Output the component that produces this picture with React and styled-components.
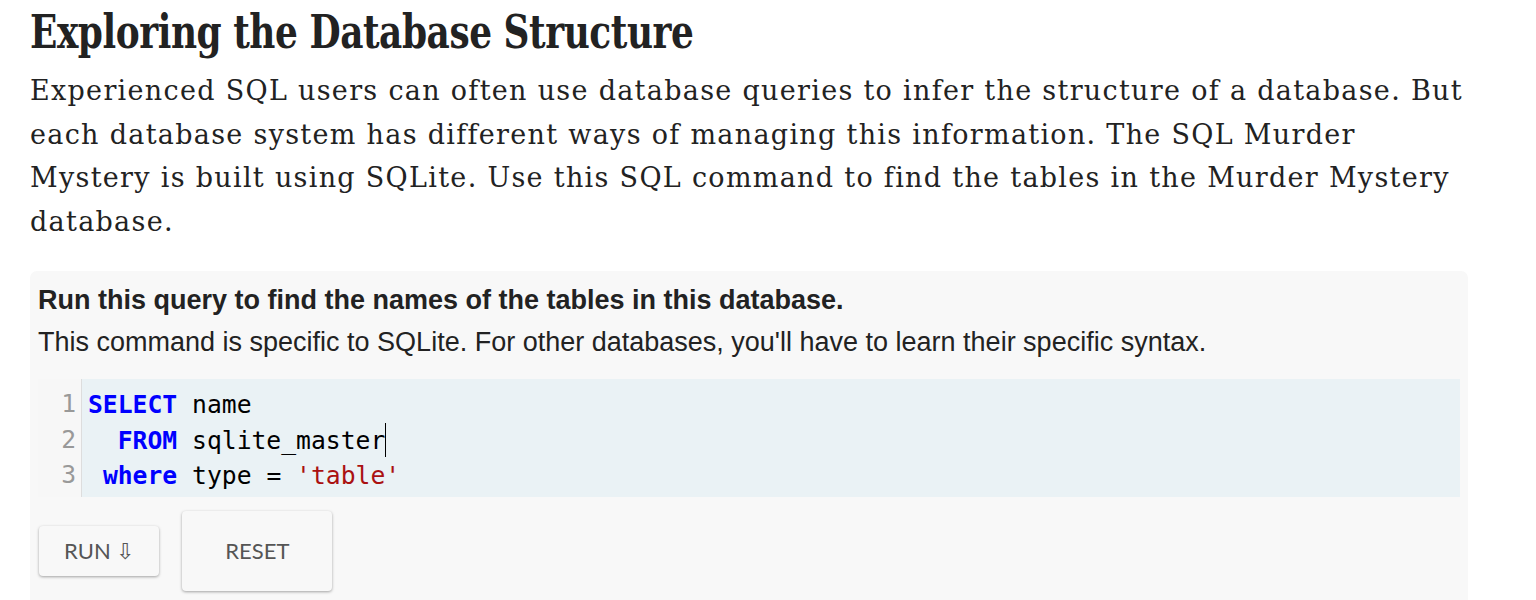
import React from "react";
import styled, { createGlobalStyle } from "styled-components";

const GlobalStyle = createGlobalStyle`
  body {
    margin: 0;
    background: #ffffff;
    color: #222;
  }
`;

const Page = styled.div`
  padding: 0px 68px 0px 30px;
`;

const Title = styled.h1`
  margin: 0;
  padding: 8px 0px 0px 0px;
  font-family: "DejaVu Serif Condensed", "DejaVu Serif", serif;
  font-stretch: condensed;
  font-size: 46px;
  line-height: 48px;
  font-weight: 700;
  letter-spacing: -0.5px;
  color: #222;
  transform: scaleX(0.867);
  transform-origin: left center;
  white-space: nowrap;
`;

const Lead = styled.p`
  margin: 13px 0px 0px 0px;
  font-family: "DejaVu Serif", serif;
  font-size: 27px;
  line-height: 43.5px;
  letter-spacing: 1.3px;
  color: #222;
`;

const Card = styled.div`
  margin: 28px 0px 0px 0px;
  padding: 12px 8px 30px 8px;
  background: #f8f8f8;
  border-radius: 7px;
  font-family: "Liberation Sans", Arial, sans-serif;
`;

const CardTitle = styled.div`
  font-size: 27px;
  line-height: 34px;
  font-weight: 700;
  color: #222;
`;

const CardText = styled.div`
  margin: 9px 0px 0px 0px;
  font-size: 27px;
  line-height: 32px;
  color: #222;
`;

const Editor = styled.div`
  margin: 21px 0px 0px 0px;
  display: flex;
  background: #eaf2f5;
  font-family: "DejaVu Sans Mono", monospace;
  font-size: 24.7px;
  line-height: 35.5px;
`;

const Gutter = styled.div`
  width: 44px;
  padding: 7px 0px 4px 0px;
  background: #f7f7f7;
  border-right: 1px solid #dddddd;
  text-align: right;
  color: #999999;
  box-sizing: border-box;
`;

const LineNo = styled.div`
  padding: 0px 5px 0px 0px;
`;

const Code = styled.div`
  flex: 1;
  padding: 8px 0px 3px 6px;
  white-space: pre;
  color: #000;
`;

const Keyword = styled.span`
  color: #0000ff;
  font-weight: 700;
`;

const Str = styled.span`
  color: #aa1111;
`;

const Cursor = styled.span`
  display: inline-block;
  width: 0;
  height: 34px;
  border-left: 1px solid #000;
  vertical-align: top;
`;

const Buttons = styled.div`
  margin: 14px 0px 0px 1px;
  display: flex;
  align-items: baseline;
  gap: 23px;
`;

const Button = styled.button`
  padding: ${({ big }) => (big ? "28px 43px" : "13px 25px")};
  background: #f8f8f8;
  border: none;
  border-radius: 4px;
  box-shadow: 0px 1px 3px rgba(0, 0, 0, 0.35);
  font-family: Lato, "Liberation Sans", sans-serif;
  font-size: 22px;
  line-height: 24px;
  color: #555555;
  cursor: pointer;
`;

const lines = [
  <>
    <Keyword>SELECT</Keyword> name
  </>,
  <>
    {"  "}
    <Keyword>FROM</Keyword> sqlite_master
    <Cursor />
  </>,
  <>
    {" "}
    <Keyword>where</Keyword> type = <Str>'table'</Str>
  </>,
];

const App = () => {
  return (
    <Page>
      <GlobalStyle />
      <Title>Exploring the Database Structure</Title>
      <Lead>
        Experienced SQL users can often use database queries to infer the structure of a database. But each database
        system has different ways of managing this information. The SQL Murder Mystery is built using SQLite. Use
        this SQL command to find the tables in the Murder Mystery database.
      </Lead>
      <Card>
        <CardTitle>Run this query to find the names of the tables in this database.</CardTitle>
        <CardText>
          This command is specific to SQLite. For other databases, you'll have to learn their specific syntax.
        </CardText>
        <Editor>
          <Gutter>
            {lines.map((_, i) => (
              <LineNo key={i}>{i + 1}</LineNo>
            ))}
          </Gutter>
          <Code>
            {lines.map((line, i) => (
              <div key={i}>{line}</div>
            ))}
          </Code>
        </Editor>
        <Buttons>
          <Button>RUN ⇩</Button>
          <Button big>RESET</Button>
        </Buttons>
      </Card>
    </Page>
  );
};

export default App;
